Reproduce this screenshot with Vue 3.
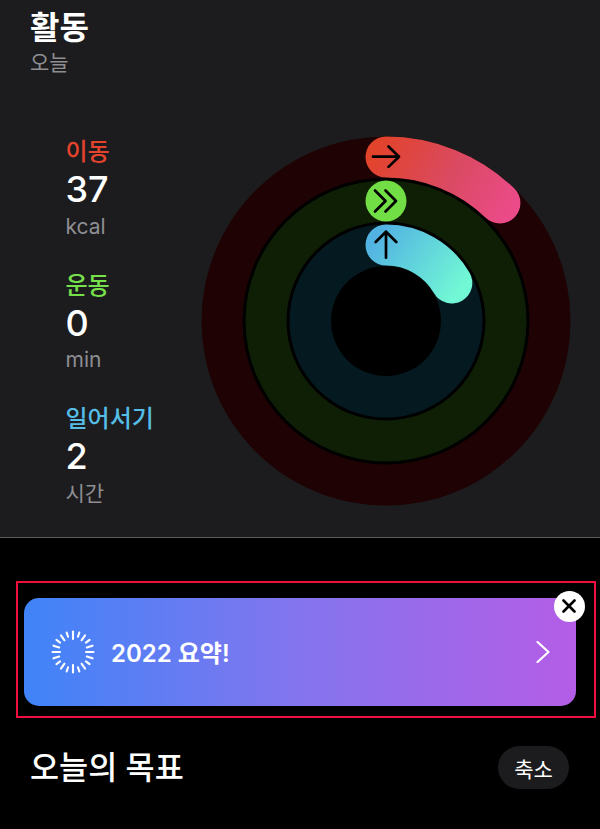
<template>
  <div class="screen">
    <section class="activity">
      <header class="activity-head">
        <h1>활동</h1>
        <p>오늘</p>
      </header>
      <div class="activity-body">
        <ul class="stats">
          <li v-for="s in stats" :key="s.label" class="stat">
            <span class="stat-label" :style="{ color: s.color }">{{ s.label }}</span>
            <span class="stat-value">{{ s.value }}</span>
            <span class="stat-unit">{{ s.unit }}</span>
          </li>
        </ul>
        <svg class="rings" width="376" height="376" viewBox="0 0 376 376">
          <defs>
            <linearGradient id="moveGrad" gradientUnits="userSpaceOnUse" x1="180" y1="10" x2="320" y2="90">
              <stop offset="0" stop-color="#e2432b" />
              <stop offset="0.5" stop-color="#da4a62" />
              <stop offset="1" stop-color="#ee4b8f" />
            </linearGradient>
            <linearGradient id="standGrad" gradientUnits="userSpaceOnUse" x1="180" y1="100" x2="260" y2="160">
              <stop offset="0" stop-color="#52b2e2" />
              <stop offset="1" stop-color="#72f8d5" />
            </linearGradient>
          </defs>
          <circle cx="188" cy="188" r="184.5" fill="#1f0203" />
          <circle cx="188" cy="188" r="143.5" fill="#000" />
          <circle cx="188" cy="188" r="140.5" fill="#0f1f06" />
          <circle cx="188" cy="188" r="99.5" fill="#000" />
          <circle cx="188" cy="188" r="96.5" fill="#051a20" />
          <circle cx="188" cy="188" r="55" fill="#000" />

          <path :d="arc(164, 44)" class="arc" stroke="url(#moveGrad)" />
          <circle cx="188" cy="68" r="20.5" fill="#72de46" />
          <path :d="arc(76, 60)" class="arc" stroke="url(#standGrad)" />

          <!-- arrows -->
          <g class="glyph">
            <path d="M175 23.700h26M190.500 13.500 201 23.700 190.500 33.900" />
            <path d="M177 57.500 187.500 68 177 78.500M187.500 57.500 198 68 187.500 78.500" />
            <path d="M188 124.700v-26M177.700 109 188 98.700 198.300 109" />
          </g>
        </svg>
      </div>
    </section>

    <div class="promo-frame">
      <div class="promo">
        <svg class="burst" width="44" height="44" viewBox="0 0 44 44">
          <line
            v-for="t in ticks"
            :key="t.id"
            :x1="t.x1" :y1="t.y1" :x2="t.x2" :y2="t.y2"
          />
        </svg>
        <span class="promo-text">2022 요약!</span>
        <svg class="chev" width="14" height="22" viewBox="0 0 14 22">
          <path d="M1.500 1 12.500 11 1.500 21" />
        </svg>
        <button class="close">
          <svg width="14" height="14" viewBox="0 0 14 14">
            <path d="M1.500 1.500l11 11M12.500 1.500l-11 11" />
          </svg>
        </button>
      </div>
    </div>

    <div class="goal-row">
      <h2>오늘의 목표</h2>
      <button class="shrink">축소</button>
    </div>
  </div>
</template>

<script setup>
const stats = [
  { label: '이동', value: '37', unit: 'kcal', color: '#e5432d' },
  { label: '운동', value: '0', unit: 'min', color: '#76e04a' },
  { label: '일어서기', value: '2', unit: '시간', color: '#55bde6' },
]

// arc clockwise from 12 o'clock, angle in degrees
const arc = (r, deg) => {
  const a = (deg * Math.PI) / 180
  const x = 188 + r * Math.sin(a)
  const y = 188 - r * Math.cos(a)
  return `M188 ${188 - r}A${r} ${r} 0 0 1 ${x.toFixed(2)} ${y.toFixed(2)}`
}

const ticks = Array.from({ length: 20 }, (_, i) => {
  const a = (i / 20) * Math.PI * 2
  const inner = i % 5 === 0 ? 13 : i % 2 ? 16 : 14.5
  const outer = 20.5
  return {
    id: i,
    x1: (22 + inner * Math.sin(a)).toFixed(2),
    y1: (22 - inner * Math.cos(a)).toFixed(2),
    x2: (22 + outer * Math.sin(a)).toFixed(2),
    y2: (22 - outer * Math.cos(a)).toFixed(2),
  }
})
</script>

<style scoped>
.screen {
  width: 600px; height: 829px; overflow: hidden;
  background: #000; color: #fff;
  font-family: Inter, "Noto Sans CJK KR", sans-serif;
}

.activity {
  width: 540px;
  height: 537px;
  background: #1c1c1e;
  border-bottom: 1px solid #5c5c5f;
  padding: 0 30px;
}
.activity-head { height: 76px; padding-top: 7px; box-sizing: border-box; }
.activity-head h1 { margin: 0; font-size: 32px; line-height: 42px; font-weight: 600; }
.activity-head p { margin: 0; font-size: 21px; line-height: 28px; color: #8e8e93; }

.activity-body { display: flex; justify-content: space-between; padding-top: 57px; margin-right: -3.500px; }

.stats { list-style: none; margin: 0; padding: 2px 0 0 36px; display: flex; flex-direction: column; gap: 27px; }
.stat { display: flex; flex-direction: column; height: 106.500px; margin-left: -0.500px; }
.stat-label { font-size: 24px; line-height: 33px; font-weight: 500; }
.stat-value { font-size: 36px; line-height: 43.500px; font-weight: 500; }
.stat-unit { font-size: 21px; line-height: 30px; color: #8e8e93; }

.rings { display: block; }
.arc { fill: none; stroke-width: 41; stroke-linecap: round; }
.glyph path { fill: none; stroke: #000; stroke-width: 2.700; stroke-linecap: round; stroke-linejoin: round; }

.promo-frame {
  margin: 43px 4px 0 16px;
  height: 137px;
  padding: 15px 18px 10px 6px;
  border: 2px solid #ef0f3f;
  box-sizing: border-box;
}
.promo {
  position: relative;
  height: 108px;
  border-radius: 15px;
  background: linear-gradient(90deg, #3f84f8 0%, #8475ee 50%, #b45de6 100%);
  display: flex; align-items: center;
  padding: 0 26px 0 27px;
}
.burst { flex-shrink: 0; }
.burst line { stroke: #fff; stroke-width: 2.100; stroke-linecap: round; }
.promo-text { margin: -2px 0 0 16px; font-size: 24px; font-weight: 600; flex: 1; }
.chev { flex-shrink: 0; }
.chev path { fill: none; stroke: #fff; stroke-width: 2.200; stroke-linecap: round; stroke-linejoin: round; }

.close {
  position: absolute; top: -7.500px; right: -8.500px;
  width: 31px; height: 31px; padding: 0; border: 0; border-radius: 50%;
  background: #fff;
  display: flex; align-items: center; justify-content: center;
}
.close path { fill: none; stroke: #000; stroke-width: 2.600; stroke-linecap: round; }

.goal-row {
  display: flex; align-items: center; justify-content: space-between;
  margin-top: 28px; padding: 0 31px 0 30px;
}
.goal-row h2 { margin: 0; font-size: 31.600px; line-height: 43px; font-weight: 500; }
.shrink {
  width: 71px; height: 43px; border: 0; border-radius: 22px;
  background: #1c1c1e; color: #fff;
  font-family: inherit; font-size: 21px; font-weight: 400;
}
</style>
